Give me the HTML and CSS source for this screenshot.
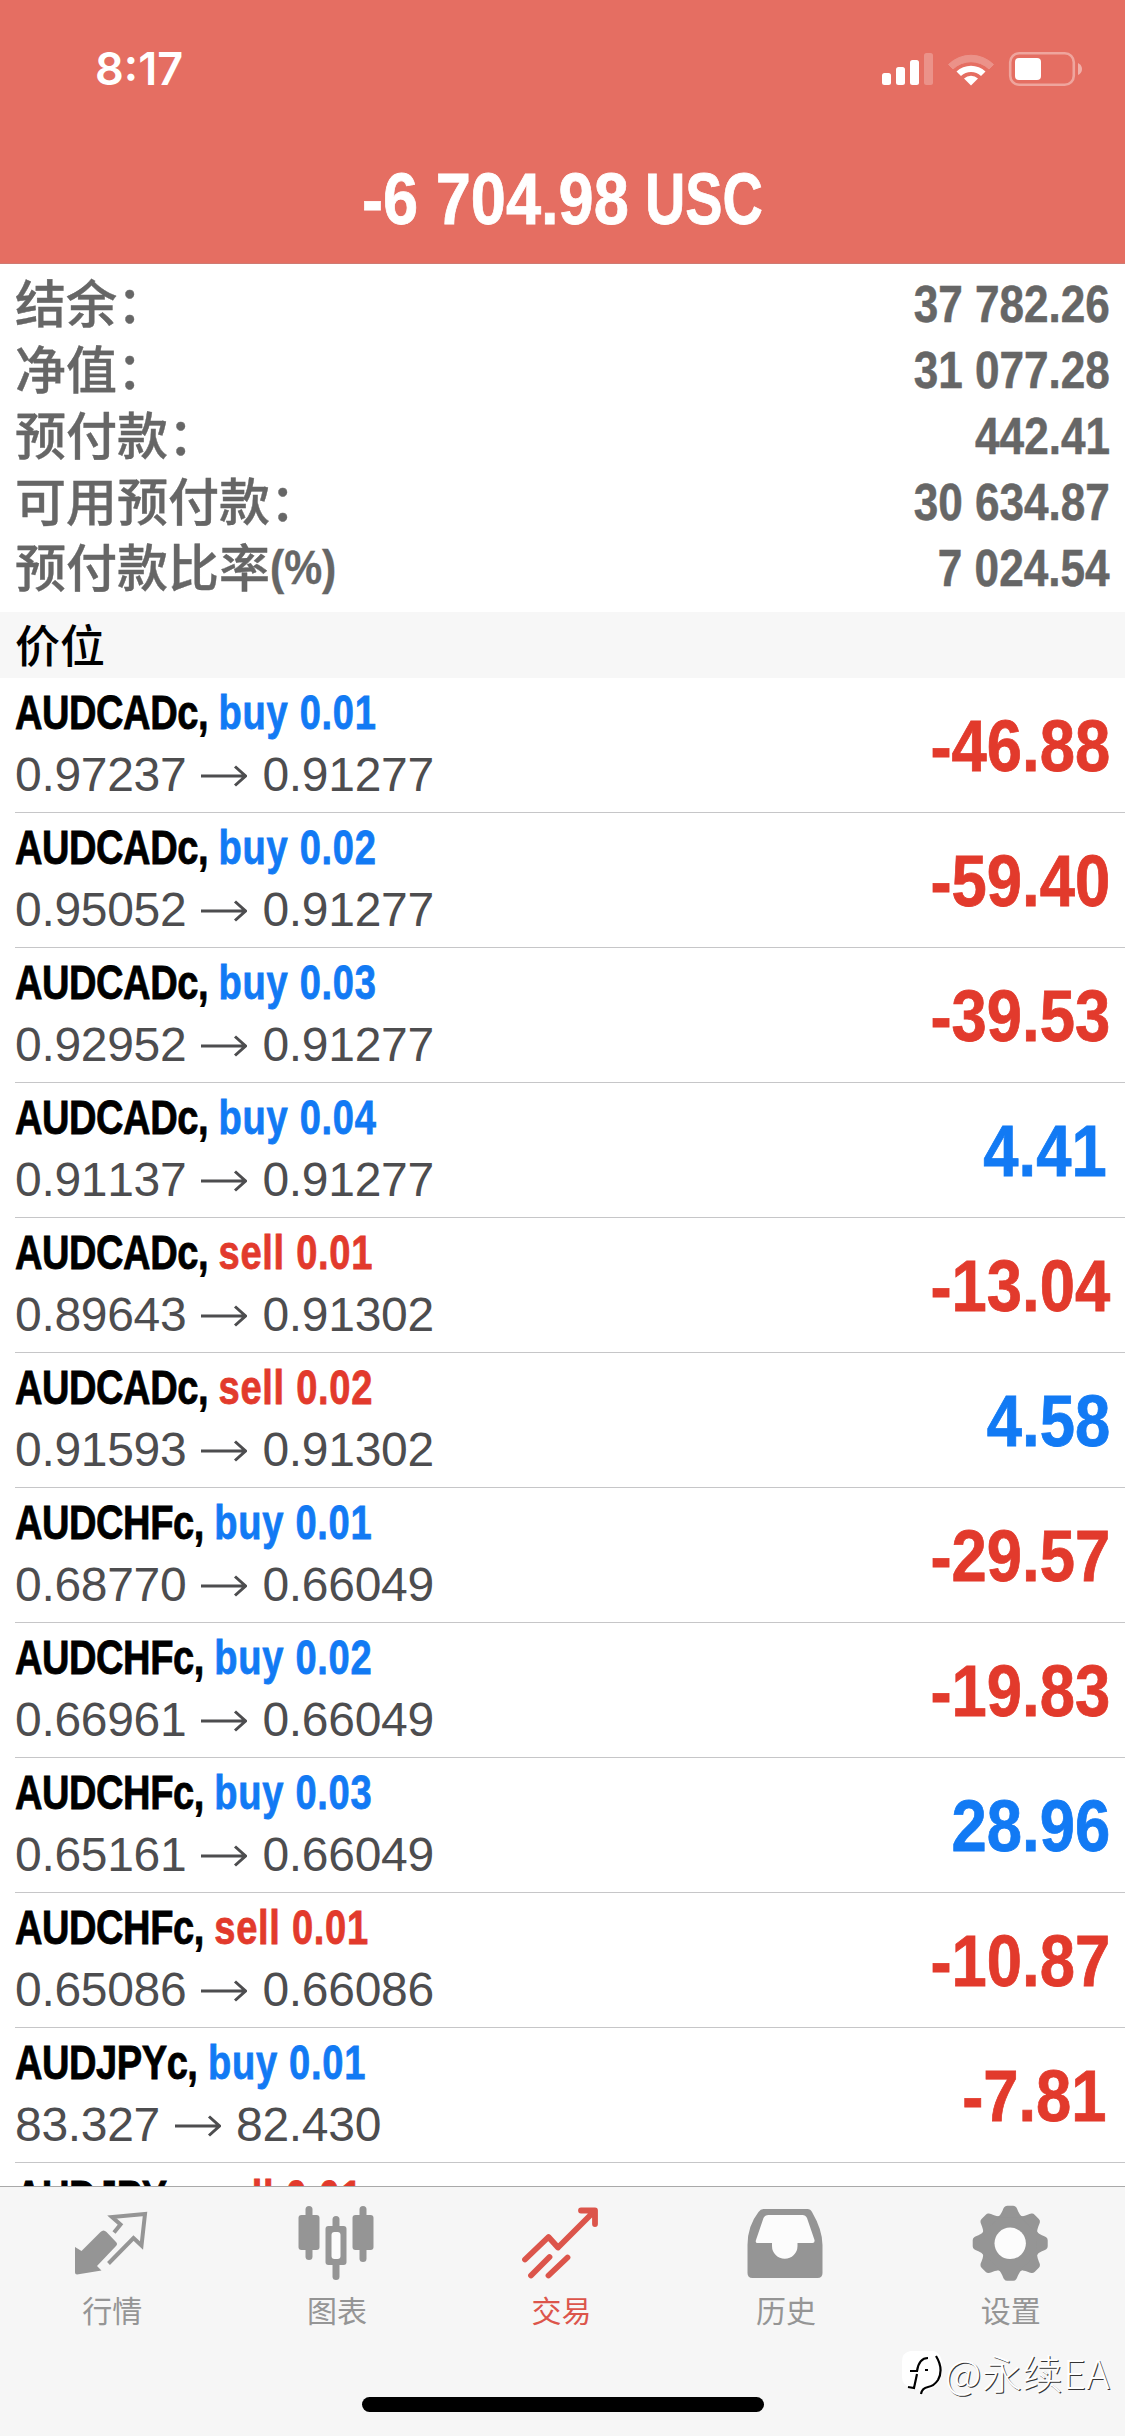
FILE: index.html
```html
<!DOCTYPE html>
<html lang="zh-CN">
<head>
<meta charset="utf-8">
<title>交易</title>
<link rel="stylesheet" href="styles.css">
</head>
<body>
<div class="screen">
  <header class="header">
    <div class="status">
      <span class="clock">8:17</span>
      <svg class="indicators" width="210" height="44" viewBox="0 0 210 44" fill="#fff">
        <rect x="7" y="26" width="9" height="12" rx="2.5"/>
        <rect x="21" y="20" width="9" height="18" rx="2.5"/>
        <rect x="35" y="13" width="9" height="25" rx="2.5"/>
        <rect x="49" y="6" width="9" height="32" rx="2.5" opacity=".25"/>
        <path d="M73.5 17.500 A32 32 0 0 1 118.500 17.500 L114 22 A26 26 0 0 0 78 22Z" opacity=".25" stroke="#fff" stroke-linejoin="round"/>
        <path d="M81.500 24.500 A21 21 0 0 1 110.500 24.500 L106 29 A14.500 14.500 0 0 0 86 29Z"/>
        <path d="M89 31.500 A10.500 10.500 0 0 1 103 31.500 L96 38.500Z"/>
        <rect x="135.200" y="6.200" width="63.600" height="31.600" rx="9" fill="none" stroke="#fff" stroke-width="2.600" opacity=".38"/>
        <rect x="140" y="11" width="26" height="22" rx="4"/>
        <path d="M203 16 Q207 18 207 22 Q207 26 203 28Z" opacity=".45"/>
      </svg>
    </div>
    <h1 class="total"><span class="amount">-6 704.98</span> <span class="currency">USC</span></h1>
  </header>

  <section class="summary">
    <div class="line"><span class="label">结余：</span><span class="value">37 782.26</span></div>
    <div class="line"><span class="label">净值：</span><span class="value">31 077.28</span></div>
    <div class="line"><span class="label">预付款：</span><span class="value">442.41</span></div>
    <div class="line"><span class="label">可用预付款：</span><span class="value">30 634.87</span></div>
    <div class="line"><span class="label">预付款比率<span class="unit">(%)</span></span><span class="value">7 024.54</span></div>
  </section>

  <h2 class="section-title">价位</h2>

  <main class="positions">
    <article class="position">
      <div class="info"><div class="name"><span class="symbol">AUDCADc,</span> <span class="side gain">buy 0.01</span></div>
      <div class="prices">0.97237<svg class="arrow" viewBox="0 0 46 24"><path d="M0 12H44M34 2.500L44.500 12L34 21.500"/></svg>0.91277</div></div>
      <div class="profit loss">-46.88</div>
    </article>
    <article class="position">
      <div class="info"><div class="name"><span class="symbol">AUDCADc,</span> <span class="side gain">buy 0.02</span></div>
      <div class="prices">0.95052<svg class="arrow" viewBox="0 0 46 24"><path d="M0 12H44M34 2.500L44.500 12L34 21.500"/></svg>0.91277</div></div>
      <div class="profit loss">-59.40</div>
    </article>
    <article class="position">
      <div class="info"><div class="name"><span class="symbol">AUDCADc,</span> <span class="side gain">buy 0.03</span></div>
      <div class="prices">0.92952<svg class="arrow" viewBox="0 0 46 24"><path d="M0 12H44M34 2.500L44.500 12L34 21.500"/></svg>0.91277</div></div>
      <div class="profit loss">-39.53</div>
    </article>
    <article class="position">
      <div class="info"><div class="name"><span class="symbol">AUDCADc,</span> <span class="side gain">buy 0.04</span></div>
      <div class="prices">0.91137<svg class="arrow" viewBox="0 0 46 24"><path d="M0 12H44M34 2.500L44.500 12L34 21.500"/></svg>0.91277</div></div>
      <div class="profit gain ends-in-one">4.41</div>
    </article>
    <article class="position">
      <div class="info"><div class="name"><span class="symbol">AUDCADc,</span> <span class="side loss">sell 0.01</span></div>
      <div class="prices">0.89643<svg class="arrow" viewBox="0 0 46 24"><path d="M0 12H44M34 2.500L44.500 12L34 21.500"/></svg>0.91302</div></div>
      <div class="profit loss">-13.04</div>
    </article>
    <article class="position">
      <div class="info"><div class="name"><span class="symbol">AUDCADc,</span> <span class="side loss">sell 0.02</span></div>
      <div class="prices">0.91593<svg class="arrow" viewBox="0 0 46 24"><path d="M0 12H44M34 2.500L44.500 12L34 21.500"/></svg>0.91302</div></div>
      <div class="profit gain">4.58</div>
    </article>
    <article class="position">
      <div class="info"><div class="name"><span class="symbol">AUDCHFc,</span> <span class="side gain">buy 0.01</span></div>
      <div class="prices">0.68770<svg class="arrow" viewBox="0 0 46 24"><path d="M0 12H44M34 2.500L44.500 12L34 21.500"/></svg>0.66049</div></div>
      <div class="profit loss">-29.57</div>
    </article>
    <article class="position">
      <div class="info"><div class="name"><span class="symbol">AUDCHFc,</span> <span class="side gain">buy 0.02</span></div>
      <div class="prices">0.66961<svg class="arrow" viewBox="0 0 46 24"><path d="M0 12H44M34 2.500L44.500 12L34 21.500"/></svg>0.66049</div></div>
      <div class="profit loss">-19.83</div>
    </article>
    <article class="position">
      <div class="info"><div class="name"><span class="symbol">AUDCHFc,</span> <span class="side gain">buy 0.03</span></div>
      <div class="prices">0.65161<svg class="arrow" viewBox="0 0 46 24"><path d="M0 12H44M34 2.500L44.500 12L34 21.500"/></svg>0.66049</div></div>
      <div class="profit gain">28.96</div>
    </article>
    <article class="position">
      <div class="info"><div class="name"><span class="symbol">AUDCHFc,</span> <span class="side loss">sell 0.01</span></div>
      <div class="prices">0.65086<svg class="arrow" viewBox="0 0 46 24"><path d="M0 12H44M34 2.500L44.500 12L34 21.500"/></svg>0.66086</div></div>
      <div class="profit loss">-10.87</div>
    </article>
    <article class="position">
      <div class="info"><div class="name"><span class="symbol">AUDJPYc,</span> <span class="side gain">buy 0.01</span></div>
      <div class="prices">83.327<svg class="arrow" viewBox="0 0 46 24"><path d="M0 12H44M34 2.500L44.500 12L34 21.500"/></svg>82.430</div></div>
      <div class="profit loss ends-in-one">-7.81</div>
    </article>
    <article class="position">
      <div class="info"><div class="name"><span class="symbol">AUDJPYc,</span> <span class="side loss">sell 0.01</span></div></div>
    </article>
  </main>

  <footer class="footer">
    <nav class="tabs">
      <a class="tab">
        <svg width="110" height="100" viewBox="-2.500 0 110 100">
          <path d="M15.500 57L22 61L41 42Q44 39 47 42L56.500 52Q58.500 54 56.500 56L37.500 76L42 80.500L17.500 84.500Q15.500 84.500 15.500 82.500Z" fill="#959595"/>
          <path d="M54.500 42.500L61 34.500L52.500 27L85.500 24L82 55.500L74 48L49 73.500" fill="none" stroke="#959595" stroke-width="4"/>
        </svg>
        <span>行情</span>
      </a>
      <a class="tab">
        <svg width="110" height="100" viewBox="282.500 2190 110 100" fill="#959595">
          <rect x="299" y="2215" width="21" height="35" rx="3"/><rect x="306" y="2206" width="7" height="54" rx="3.500"/>
          <rect x="353" y="2215" width="21" height="35" rx="3"/><rect x="360" y="2206" width="7" height="56" rx="3.500"/>
          <rect x="333" y="2216" width="7" height="64" rx="3.500"/><rect x="326" y="2226" width="21" height="39" rx="3"/>
          <rect x="332" y="2232" width="9" height="27" rx="3" fill="#fcfcfc"/>
        </svg>
        <span>图表</span>
      </a>
      <a class="tab active">
        <svg width="110" height="100" viewBox="-2.500 0 110 100">
          <path d="M16.500 69.500L40 47L49.500 57.500L85 22M72.500 20.500H86.500V34M22.500 85.500L41 67M40 85.500L59 67.500" fill="none" stroke="#dc554b" stroke-width="5.800" stroke-linecap="round" stroke-linejoin="round"/>
        </svg>
        <span>交易</span>
      </a>
      <a class="tab">
        <svg width="110" height="100" viewBox="-7.500 0 110 100">
          <path d="M25 19H69Q72 19 73.500 22Q84 40 84 55V83Q84 88 79 88H14Q9 88 9 83V55Q9 36 20 22Q22 19 25 19Z" fill="#959595"/>
          <path d="M30 25H64Q67 25 68.500 28L76 50Q76.500 53 74 53H59V56A12.500 12.500 0 0 1 33.500 56V53H19Q16.500 53 17.500 50L25 28Q26.500 25 30 25Z" fill="#fcfcfc"/>
        </svg>
        <span>历史</span>
      </a>
      <a class="tab">
        <svg width="110" height="100" viewBox="-54.200 -53.300 110 100" fill="#959595">
          <defs><path id="tooth" d="M-12-26C-8-30-7.500-34-6-36Q-5-37.500-3-37.500H3Q5-37.500 6-36C7.500-34 8-30 12-26Z"/></defs>
          <circle r="29.500"/>
          <use href="#tooth"/><use href="#tooth" transform="rotate(45)"/><use href="#tooth" transform="rotate(90)"/><use href="#tooth" transform="rotate(135)"/><use href="#tooth" transform="rotate(180)"/><use href="#tooth" transform="rotate(225)"/><use href="#tooth" transform="rotate(270)"/><use href="#tooth" transform="rotate(315)"/>
          <circle r="15.700" fill="#fcfcfc"/>
        </svg>
        <span>设置</span>
      </a>
    </nav>
    <div class="home-bar"></div>
    <div class="watermark">
      <svg width="44" height="48" viewBox="0 0 44 48">
        <path d="M9 2H33Q42 5 41 19Q41 36 29 40Q24 41 21 46Q20 39 9 38Q1 36 1 28V12Q1 4 9 2Z" fill="#fff"/>
        <path d="M35 7Q43 20 37 31Q33 37 27 38Q21 39 20 45M7 38L13 39L16 25M9 22H16Q18 9 27 9M24 21H27" fill="none" stroke="#000" stroke-width="2.200"/>
      </svg>
      <span>@永续EA</span>
    </div>
  </footer>
</div>
</body>
</html>
```
FILE: styles.css
```css
* { box-sizing: border-box; }
body { margin: 0; background: #fff; }
.screen {
  width: 1125px;
  height: 2436px;
  overflow: hidden;
  display: flex;
  flex-direction: column;
  font-family: "Liberation Sans", "Noto Sans CJK SC", sans-serif;
  font-kerning: none;
}
.header { height: 264px; flex: none; background: #e56e62; color: #fff; border-bottom: 1px solid #cf7a72; }
.status { height: 159px; padding: 47px 40px 0 95px; display: flex; justify-content: space-between; }
.clock { font: 600 45px/44px "Inter", sans-serif; }
.total {
  margin: 0;
  display: flex;
  justify-content: center;
  gap: 16px;
  font-size: 72px;
  line-height: 80px;
  white-space: nowrap;
  -webkit-text-stroke: .8px #fff;
}
.total span { transform-origin: left; }
.amount { width: 267px; transform: scaleX(.877); }
.currency { width: 118px; transform: scaleX(.775); }

.summary { height: 348px; flex: none; padding: 7px 15px 0; color: #666; background: #fff; }
.line { height: 66px; display: flex; justify-content: space-between; }
.label { margin-top: -3px; font: 500 51px/66px "Noto Sans CJK SC", sans-serif; white-space: nowrap; -webkit-text-stroke: .4px #666; }
.unit { display: inline-block; font: bold 49px/60px "Liberation Sans", sans-serif; transform: translateY(-3px) scaleX(.87); transform-origin: left; }
.value { font-size: 51px; font-weight: bold; line-height: 67px; transform: scaleX(.865); transform-origin: right; -webkit-text-stroke: .5px #666; }

.section-title {
  flex: none;
  height: 66px;
  margin: 0;
  padding-left: 15px;
  background: #f7f7f7;
  font: 500 45px/64px "Noto Sans CJK SC", sans-serif;
}

.positions { height: 1508px; flex: none; overflow: hidden; padding-left: 15px; background: #fff; }
.position { height: 135px; padding: 4px 15px 0 0; display: flex; justify-content: space-between; border-bottom: 1px solid #c6c6c8; color: #000; }
.info { white-space: nowrap; }
.name { font-size: 49px; font-weight: bold; line-height: 60px; transform: scaleX(.777); transform-origin: left; -webkit-text-stroke: .8px currentColor; }
.symbol { letter-spacing: -.6px; }
.side { letter-spacing: .9px; -webkit-text-stroke: .8px currentColor; }
.prices { display: flex; align-items: center; margin-top: 3px; font-size: 48px; line-height: 60px; color: #4d4d4f; letter-spacing: -.3px; }
.arrow { width: 46px; height: 24px; margin: 2px 15px 0 15px; fill: none; stroke: #4d4d4f; stroke-width: 3; }
.profit { font-size: 72px; font-weight: bold; line-height: 128px; transform: scaleX(.88); transform-origin: right; -webkit-text-stroke: .8px currentColor; }
.ends-in-one { padding-right: 4px; }
.gain { color: #127af4; }
.loss { color: #e23a2c; }

.footer { position: relative; height: 250px; flex: none; background: #f6f6f6; border-top: 1px solid #a9a9a9; }
.tabs { display: grid; grid-template-columns: repeat(5, 1fr); padding: 3px 2px 0 0; }
.tab { display: flex; flex-direction: column; align-items: center; color: #959595; font: 400 30px/38px "Noto Sans CJK SC", sans-serif; }
.active { color: #dc554b; }
.home-bar { width: 402px; height: 15px; margin: 69px auto 0; border-radius: 8px; background: #000; }
.watermark {
  position: absolute;
  left: 901px;
  top: 162px;
  display: flex;
  font: 300 40px/46px "Noto Sans CJK SC", sans-serif;
  letter-spacing: .5px;
  color: #fff;
  text-shadow: 1px 1px 0 #333;
  white-space: nowrap;
}
```
